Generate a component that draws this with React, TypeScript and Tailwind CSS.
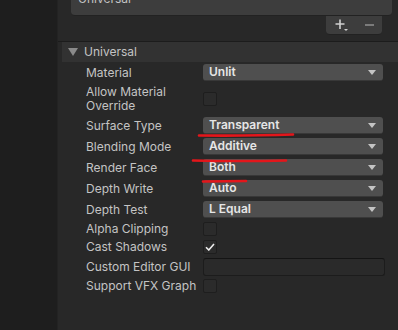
import React from 'react';

const font = { fontFamily: 'Inter, "Noto Sans", sans-serif' };

const Dropdown = ({ value }: { value: string }) => (
  <div className="flex h-[17px] w-[180px] items-center justify-between rounded-[3px] border-b border-[#383838] bg-[#4f4f4f] pl-[6px] pr-[7px]">
    <span className="text-[12px] font-semibold leading-none text-[#e6e6e6]">{value}</span>
    <svg width="8" height="5" viewBox="0 0 8 5">
      <path d="M0 0 L8 0 L4 5 Z" fill="#c4c4c4" />
    </svg>
  </div>
);

const Checkbox = ({ checked = false }: { checked?: boolean }) => (
  <div className="flex h-[14px] w-[14px] items-center justify-center rounded-[2px] border border-[#1e1e1e] bg-[#2b2b2b]">
    {checked && (
      <svg width="10" height="8" viewBox="0 0 10 8">
        <path d="M1 4.2 L3.8 7 L9 1" stroke="#eeeeee" strokeWidth="1.6" fill="none" />
      </svg>
    )}
  </div>
);

const Row = ({ label, h, children }: { label: React.ReactNode; h: string; children?: React.ReactNode }) => (
  <div className={`flex items-center ${h}`}>
    <div className="w-[145px] shrink-0 whitespace-nowrap pl-[28px] text-[12px] leading-[14px] text-[#c4c4c4]">{label}</div>
    <div className="flex-1">{children}</div>
  </div>
);

export default function App() {
  return (
    <div className="relative flex h-[330px] w-[398px] overflow-hidden bg-[#282828]" style={font}>
      <div className="w-[58px] shrink-0 border-r border-[#232323] bg-[#1e1e1e]" />
      <div className="flex flex-1 flex-col">
        {/* list box */}
        <div className="ml-[13px] mr-[6px] h-[16px] overflow-hidden rounded-b-[4px] border-b border-[#222222] bg-[#3d3d3d] pl-[7px]">
          <div className="-mt-[8px] text-[12px] leading-[14px] text-[#c4c4c4]">Universal</div>
        </div>
        <div className="ml-[268px] flex h-[19px] w-[56px] items-center gap-[16px] rounded-b-[4px] border-b border-[#222222] bg-[#3d3d3d] pl-[9px]">
          <svg width="14" height="12" viewBox="0 0 14 12">
            <path d="M5 0.5 V10 M0.5 5 H9.5" stroke="#cfcfcf" strokeWidth="1.6" />
            <path d="M9 10 L13 10 L11 12 Z" fill="#cfcfcf" />
          </svg>
          <svg width="9" height="2" viewBox="0 0 9 2">
            <path d="M0 1 H9" stroke="#8c8c8c" strokeWidth="1.6" />
          </svg>
        </div>
        <div className="mt-[6px] border-b border-[#1c1c1c]" />
        {/* header */}
        <div className="ml-[4px] flex h-[20px] items-center bg-[#323232]">
          <svg className="ml-[6px]" width="10" height="8" viewBox="0 0 10 8">
            <path d="M0 0 H10 L5 8 Z" fill="#8a8a8a" />
          </svg>
          <span className="ml-[6px] text-[12px] leading-none text-[#c4c4c4]">Universal</span>
        </div>
        <Row label="Material" h="h-[21px]">
          <Dropdown value="Unlit" />
        </Row>
        <Row label={<>Allow Material<br />Override</>} h="h-[32px]">
          <Checkbox />
        </Row>
        <Row label="Surface Type" h="h-[21px]">
          <Dropdown value="Transparent" />
        </Row>
        <Row label="Blending Mode" h="h-[21px]">
          <Dropdown value="Additive" />
        </Row>
        <Row label="Render Face" h="h-[21px]">
          <Dropdown value="Both" />
        </Row>
        <Row label="Depth Write" h="h-[21px]">
          <Dropdown value="Auto" />
        </Row>
        <Row label="Depth Test" h="h-[21px]">
          <Dropdown value="L Equal" />
        </Row>
        <Row label="Alpha Clipping" h="h-[18px]">
          <Checkbox />
        </Row>
        <Row label="Cast Shadows" h="h-[18px]">
          <Checkbox checked />
        </Row>
        <Row label="Custom Editor GUI" h="h-[21px]">
          <div className="h-[18px] w-[182px] rounded-[3px] border border-[#1c1c1c] border-t-[#141414] bg-[#2a2a2a]" />
        </Row>
        <Row label="Support VFX Graph" h="h-[17px]">
          <Checkbox />
        </Row>
      </div>
      {/* red annotation strokes */}
      <svg className="pointer-events-none absolute left-0 top-0" width="398" height="330" viewBox="0 0 398 330">
        <path d="M199 135.5 Q250 136 293 134.5" stroke="#e3161b" strokeWidth="2.6" strokeLinecap="round" fill="none" />
        <path d="M193 160.5 Q240 161.5 286 160.5" stroke="#e3161b" strokeWidth="2.6" strokeLinecap="round" fill="none" />
        <path d="M203 181.5 Q225 181 246 181" stroke="#e3161b" strokeWidth="2.6" strokeLinecap="round" fill="none" />
      </svg>
    </div>
  );
}
